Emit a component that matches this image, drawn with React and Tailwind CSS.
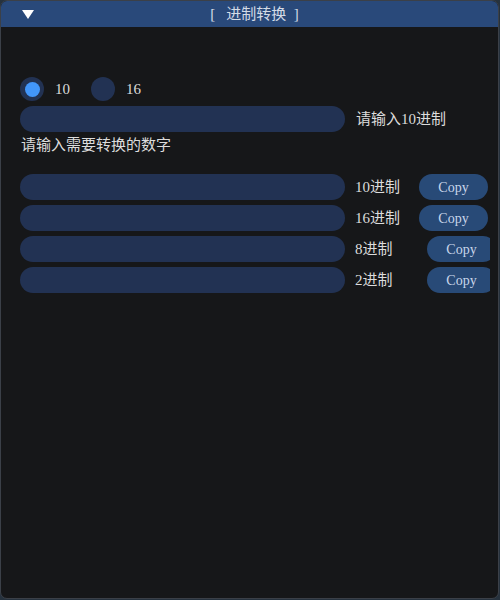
import React, { useState } from "react";

const font = { fontFamily: '"Liberation Serif", "Noto Sans CJK SC", serif' };

function Radio({ checked, label, onClick }) {
  return (
    <button onClick={onClick} className="flex items-center gap-[11px]">
      <span className="w-[24px] h-[24px] rounded-full bg-[#223253] flex items-center justify-center">
        {checked && <span className="w-[15px] h-[15px] rounded-full bg-[#4296fa]" />}
      </span>
      <span className="text-[15px] text-[#dcdcdc]">{label}</span>
    </button>
  );
}

function Row({ label, labelWidth }) {
  return (
    <div className="flex items-center h-[26px]">
      <div className="w-[325px] h-[26px] rounded-full bg-[#223253] shrink-0" />
      <span className="ml-[10px] text-[15px] text-[#dcdcdc] shrink-0" style={{ width: labelWidth }}>
        {label}
      </span>
      <button className="w-[69px] h-[26px] rounded-full bg-[#284a77] text-[14px] text-[#c9d6ea] shrink-0">
        Copy
      </button>
    </div>
  );
}

export default function App() {
  const [base, setBase] = useState(10);
  const rows = [
    { label: "10进制", w: 64 },
    { label: "16进制", w: 64 },
    { label: "8进制", w: 72 },
    { label: "2进制", w: 72 },
  ];

  return (
    <div className="w-[500px] h-[600px] bg-[#26323e]" style={font}>
      <div className="w-[499px] h-[599px] rounded-[7px] border border-[#3b4048] bg-[#161719] overflow-hidden flex flex-col">
        <div className="h-[26px] bg-[#29497a] flex items-center relative shrink-0">
          <svg className="absolute left-[21px] top-[9px]" width="12" height="10" viewBox="0 0 12 10">
            <polygon points="0,0 12,0 6,9" fill="#ffffff" />
          </svg>
          <div className="w-full pl-[10px] text-center text-[15px] text-[#d4dbe6] whitespace-pre">{"[   进制转换  ]"}</div>
        </div>
        <div className="flex-1 pl-[19px] w-[489px] overflow-hidden">
          <div className="mt-[50px] flex items-center gap-[21px]">
            <Radio checked={base === 10} label="10" onClick={() => setBase(10)} />
            <Radio checked={base === 16} label="16" onClick={() => setBase(16)} />
          </div>
          <div className="mt-[5px] flex items-center h-[26px]">
            <div className="w-[325px] h-[26px] rounded-full bg-[#223253] shrink-0" />
            <span className="ml-[11px] text-[15px] text-[#dcdcdc] whitespace-nowrap">请输入{base}进制</span>
          </div>
          <div className="mt-[4px] ml-[1px] text-[15px] text-[#dcdcdc] leading-[18px]">请输入需要转换的数字</div>
          <div className="mt-[20px] flex flex-col gap-[5px]">
            {rows.map((r) => (
              <Row key={r.label} label={r.label} labelWidth={r.w} />
            ))}
          </div>
        </div>
      </div>
    </div>
  );
}
